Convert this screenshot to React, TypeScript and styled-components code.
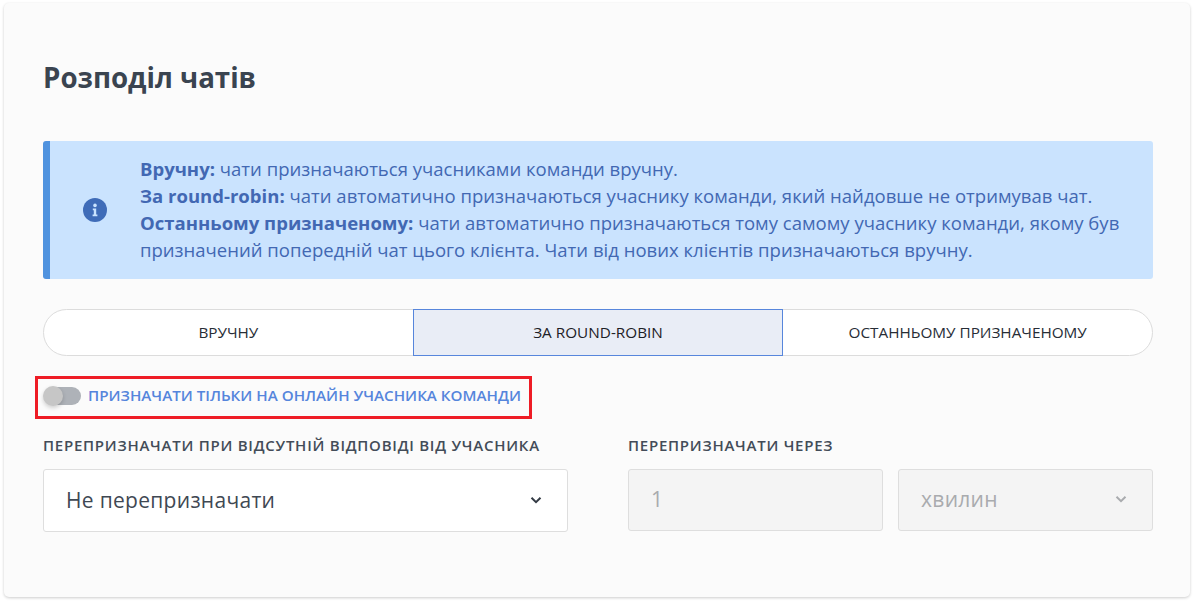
import React from 'react'
import styled, { createGlobalStyle } from 'styled-components'

const GlobalStyle = createGlobalStyle`
  html, body {
    margin: 0;
    padding: 0;
    background: #ffffff;
    font-family: "Open Sans", "Noto Sans", sans-serif;
  }
`

const Page = styled.div`
  width: 1194px;
  height: 602px;
  box-sizing: border-box;
  padding: 3px 4px 5px 4px;
  overflow: hidden;
`

const Card = styled.section`
  height: 100%;
  box-sizing: border-box;
  padding: 57px 37px 0 39px;
  background: #fbfbfb;
  border-radius: 5px;
  box-shadow: 0 1px 3px rgba(0, 0, 0, 0.2);
`

const Title = styled.h2`
  margin: 0 0 42px;
  height: 39px;
  font-size: 27.7px;
  line-height: 35px;
  font-weight: 700;
  color: #3a4450;
`

const InfoBox = styled.div`
  height: 138px;
  box-sizing: border-box;
  display: flex;
  align-items: center;
  background: #cae3fe;
  border-left: 7px solid #5093df;
  border-radius: 3px;
`

const InfoIconSlot = styled.div`
  width: 90px;
  flex: none;
  display: flex;
  justify-content: center;
  color: #3f6cb8;
`

const InfoText = styled.div`
  padding-bottom: 2px;
  font-size: 18.55px;
  line-height: 27.2px;
  color: #4268b3;

  b {
    font-weight: 700;
  }
`

const Tabs = styled.div`
  display: flex;
  height: 47px;
  margin-top: 30px;
  box-sizing: border-box;
  background: #ffffff;
  border: 1px solid #dcdcdc;
  border-radius: 24px;
`

const Tab = styled.div<{ $active?: boolean }>`
  flex: 1;
  margin: ${({ $active }) => ($active ? '-1px 0' : '0')};
  padding-bottom: 2px;
  box-sizing: border-box;
  display: flex;
  align-items: center;
  justify-content: center;
  font-size: 15.3px;
  font-weight: 500;
  color: ${({ $active }) => ($active ? '#1d2127' : '#272d36')};
  background: ${({ $active }) => ($active ? '#e9edf6' : 'transparent')};
  border: ${({ $active }) => ($active ? '1px solid #5786dc' : 'none')};
`

const Highlight = styled.div`
  display: flex;
  align-items: center;
  gap: 7px;
  width: 497px;
  height: 43px;
  box-sizing: border-box;
  margin: 20px 0 0 -8px;
  padding: 0 0 4px 3px;
  border: 3px solid #ee1c25;
`

const Toggle = styled.span`
  position: relative;
  flex: none;
  width: 37px;
  height: 18px;
  margin-left: 3px;
  border-radius: 9px;
  background: #aeb2b8;
`

const Knob = styled.span`
  position: absolute;
  left: -1px;
  top: -1px;
  width: 20px;
  height: 20px;
  border-radius: 50%;
  background: #c6c6c6;
  box-shadow: 0 2px 4px rgba(0, 0, 0, 0.18);
`

const ToggleLabel = styled.span`
  margin-bottom: 2px;
  font-size: 15.2px;
  font-weight: 600;
  color: #5585dc;
  white-space: nowrap;
`

const FormRow = styled.div`
  display: flex;
  gap: 60px;
  margin-top: 15px;
`

const Field = styled.div<{ $width: number }>`
  width: ${({ $width }) => $width}px;
  display: flex;
  flex-direction: column;
`

const FieldLabel = styled.label`
  height: 22px;
  margin-bottom: 13px;
  font-size: 15px;
  line-height: 22px;
  font-weight: 600;
  letter-spacing: 0.75px;
  color: #434c58;
  white-space: nowrap;
`

const Controls = styled.div`
  display: flex;
  gap: 15px;
`

const Control = styled.div<{ $disabled?: boolean }>`
  flex: 1;
  height: ${({ $disabled }) => ($disabled ? '62px' : '63px')};
  box-sizing: border-box;
  display: flex;
  align-items: center;
  justify-content: space-between;
  padding: 0 24px 2px 22px;
  font-size: 21px;
  letter-spacing: 0.3px;
  color: ${({ $disabled }) => ($disabled ? '#a9abae' : '#3f4853')};
  background: ${({ $disabled }) => ($disabled ? '#f4f4f4' : '#ffffff')};
  border: 1px solid #dedede;
  border-radius: 3px;
`

const Chevron = ({ color }: { color: string }) => (
  <svg width="14" height="14" viewBox="0 0 14 14" fill="none">
    <path d="M2.5 4.8 7 9.2l4.5-4.4" stroke={color} strokeWidth="2" />
  </svg>
)

const InfoIcon = () => (
  <svg width="24" height="24" viewBox="0 0 24 24">
    <circle cx="12" cy="12" r="12" fill="currentColor" />
    <circle cx="12" cy="7.4" r="1.8" fill="#cae3fe" />
    <path d="M9.8 10.6h3.4v6h1.2v1.6H9.6v-1.6h1.2v-4.4h-1z" fill="#cae3fe" />
  </svg>
)

export default function App() {
  return (
    <Page>
      <GlobalStyle />
      <Card>
        <Title>Розподіл чатів</Title>
        <InfoBox>
          <InfoIconSlot>
            <InfoIcon />
          </InfoIconSlot>
          <InfoText>
            <b>Вручну:</b> чати призначаються учасниками команди вручну.
            <br />
            <b>За round-robin:</b> чати автоматично призначаються учаснику команди, який найдовше не отримував чат.
            <br />
            <b>Останньому призначеному:</b> чати автоматично призначаються тому самому учаснику команди, якому був
            <br />
            призначений попередній чат цього клієнта. Чати від нових клієнтів призначаються вручну.
          </InfoText>
        </InfoBox>
        <Tabs>
          <Tab>ВРУЧНУ</Tab>
          <Tab $active>ЗА ROUND-ROBIN</Tab>
          <Tab>ОСТАННЬОМУ ПРИЗНАЧЕНОМУ</Tab>
        </Tabs>
        <Highlight>
          <Toggle>
            <Knob />
          </Toggle>
          <ToggleLabel>ПРИЗНАЧАТИ ТІЛЬКИ НА ОНЛАЙН УЧАСНИКА КОМАНДИ</ToggleLabel>
        </Highlight>
        <FormRow>
          <Field $width={525}>
            <FieldLabel>ПЕРЕПРИЗНАЧАТИ ПРИ ВІДСУТНІЙ ВІДПОВІДІ ВІД УЧАСНИКА</FieldLabel>
            <Controls>
              <Control>
                Не перепризначати
                <Chevron color="#333a44" />
              </Control>
            </Controls>
          </Field>
          <Field $width={525}>
            <FieldLabel>ПЕРЕПРИЗНАЧАТИ ЧЕРЕЗ</FieldLabel>
            <Controls>
              <Control $disabled>1</Control>
              <Control $disabled>
                хвилин
                <Chevron color="#a9abae" />
              </Control>
            </Controls>
          </Field>
        </FormRow>
      </Card>
    </Page>
  )
}
